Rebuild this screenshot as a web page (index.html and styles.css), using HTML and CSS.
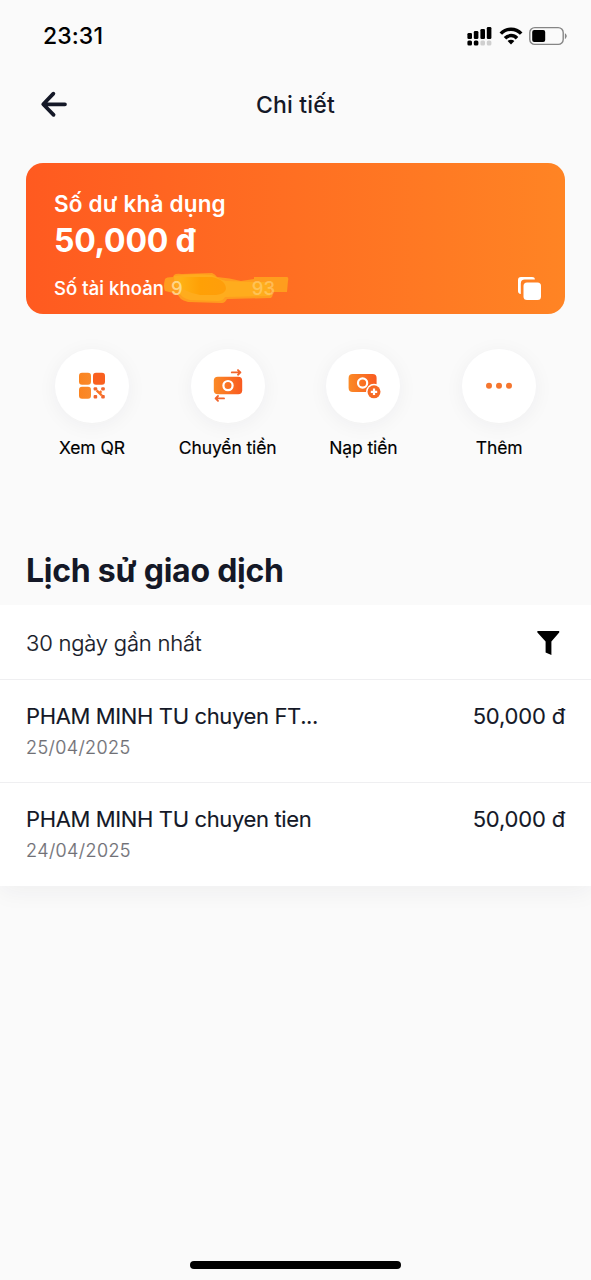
FILE: index.html
```html
<!DOCTYPE html>
<html lang="vi">
<head>
<meta charset="utf-8">
<title>Chi tiết</title>
<link rel="stylesheet" href="styles.css">
</head>
<body>
<svg class="defs" width="0" height="0" aria-hidden="true">
  <defs>
    <linearGradient id="flame" x1="0" y1="0" x2="1" y2="0"><stop offset="0" stop-color="#fb8a26"/><stop offset="1" stop-color="#f95a20"/></linearGradient>
    <linearGradient id="amber" x1="0" y1="0" x2="1" y2="0"><stop offset="0" stop-color="#fb8420"/><stop offset="1" stop-color="#f98a2c"/></linearGradient>
    <linearGradient id="stroke-core" x1="0" y1="0" x2="1" y2="0"><stop offset="0" stop-color="#ffb414"/><stop offset=".45" stop-color="#ff9d00"/><stop offset="1" stop-color="#ff9a06"/></linearGradient>
  </defs>
</svg>
<div class="screen">
  <div class="status">
    <span class="time">23:31</span>
    <svg class="status-icons" width="102" height="24" viewBox="0 0 102 24">
      <g fill="#000">
        <rect x="1.4" y="10" width="4.6" height="6" rx="1.3"/><rect x="7.8" y="8" width="4.6" height="8" rx="1.3"/><rect x="14.4" y="6" width="4.6" height="10" rx="1.3"/><rect x="20.8" y="4" width="4.6" height="12" rx="1.3"/>
        <rect x="1.4" y="17.6" width="4.6" height="5" rx="1.5"/><rect x="7.8" y="17.6" width="4.6" height="5" rx="1.5"/>
      </g>
      <g fill="#cfcfcf"><rect x="14.4" y="17.6" width="4.6" height="5" rx="1.5"/><rect x="20.8" y="17.6" width="4.6" height="5" rx="1.5"/></g>
      <g fill="none" stroke="#000" stroke-width="3.5"><path d="M34.8 10.6a14 14 0 0 1 20.4 0"/><path d="M39 15.2a8.2 8.2 0 0 1 12 0"/></g>
      <path d="M45 21.6l-3.4-3.5a4.8 4.8 0 0 1 6.8 0z"/>
      <rect x="63.8" y="4.6" width="33.4" height="16.8" rx="5" fill="none" stroke="#858585" stroke-width="1.4"/>
      <rect x="66.2" y="7" width="13" height="12" rx="2"/>
      <path d="M99.4 10.8q1.8 2.3 0 4.6z" fill="#858585" stroke="#858585"/>
    </svg>
  </div>
  <header class="header">
    <svg class="back" width="28" height="28" viewBox="0 0 28 28" fill="none" stroke="#141827" stroke-width="3.7" stroke-linecap="round" stroke-linejoin="round"><path d="M13.4 3.6L3.2 14.3l10.4 10.6M4 14.3H25"/></svg>
    <h1 class="title">Chi tiết</h1>
    <span></span>
  </header>
  <section class="card">
    <div class="card-label">Số dư khả dụng</div>
    <div class="card-amount">50,000 đ</div>
    <div class="card-account"><span>Số tài khoản</span><span class="digits">9</span><span class="digits tail">93</span>
      <svg class="marker" width="128" height="34" viewBox="0 0 128 34">
        <path d="M3 7Q4 5 11 5L12 3Q14 1 20 2L50 1Q53 2 55 5Q68 6 79 9L92 7V5H125Q127 5 126 9L125 20H110Q112 23 109 26L65 27Q63 31 60 31L26 30Q16 27 16 22L3 19Q1 15 3 7Z" fill="#ffa21e" fill-opacity=".9"/>
        <path d="M12 4Q30 1 50 3Q56 7 64 9L92 10H108V24L63 25Q61 29 56 29L28 28Q18 25 17 20Q12 14 12 4Z" fill="#ffb81c" fill-opacity=".6"/>
        <path d="M20 5H50Q64 8 64 17Q63 22 54 23H38Q21 20 17 12Q16 6 20 5Z" fill="url(#stroke-core)" fill-opacity=".8"/>
      </svg>
    </div>
    <svg class="copy" width="26" height="26" viewBox="0 0 26 26"><path d="M18.8 4.4V4Q18.8 2 16 2H5Q2 2 2 5V16Q2 18.5 4.8 19V8.4Q4.8 4.4 8.8 4.4Z" fill="#fff"/><rect x="7.5" y="7.5" width="17.5" height="17.5" rx="3.5" fill="#fff"/></svg>
  </section>
  <nav class="actions">
    <div class="action"><span class="circle"><svg width="36" height="36" viewBox="0 0 36 36">
      <rect x="5" y="4.8" width="12" height="12" rx="3" fill="url(#amber)"/><rect x="19" y="4.8" width="12" height="12" rx="3" fill="#f9601f"/><rect x="5" y="18.8" width="12" height="12" rx="3" fill="url(#amber)"/>
      <g fill="#f0672f"><rect x="19.6" y="19.2" width="3.6" height="3.4" rx="1"/><rect x="27.2" y="19.2" width="3.6" height="3.4" rx="1"/><rect x="19.6" y="27" width="3.6" height="3.4" rx="1"/><rect x="27.2" y="27" width="3.6" height="3.4" rx="1"/></g><path d="M22.6 22.4l5.2 5M25.6 24.8l1.8-1.6" stroke="#fb7425" stroke-width="2.4"/>
    </svg></span><span class="action-label">Xem QR</span></div>
    <div class="action"><span class="circle"><svg width="36" height="36" viewBox="0 0 36 36">
      <rect x="3.8" y="8.8" width="28.4" height="17.4" rx="4" fill="url(#flame)"/><circle cx="18" cy="17.6" r="4.6" fill="none" stroke="#fff" stroke-width="2.2"/>
      <g fill="none" stroke="#f2642b" stroke-width="1.9" stroke-linecap="round" stroke-linejoin="round"><path d="M21.8 4.4h8.6M28 2.1l2.4 2.3-2.4 2.3"/><path d="M14 30.4H5.6M8 28l-2.4 2.4L8 32.8"/></g>
    </svg></span><span class="action-label">Chuyển tiền</span></div>
    <div class="action"><span class="circle"><svg width="36" height="36" viewBox="0 0 36 36">
      <rect x="3.6" y="6" width="28" height="18" rx="4" fill="url(#flame)"/><circle cx="17.6" cy="15" r="4.6" fill="none" stroke="#fff" stroke-width="2.2"/>
      <circle cx="29" cy="23.8" r="8" fill="#fff"/><circle cx="29" cy="23.8" r="6.5" fill="#f66a25"/><path d="M29 20.6v6.4M25.8 23.8h6.4" stroke="#fff" stroke-width="2.2"/>
    </svg></span><span class="action-label">Nạp tiền</span></div>
    <div class="action"><span class="circle"><svg width="36" height="36" viewBox="0 0 36 36"><g fill="#f5762f"><circle cx="8" cy="17.8" r="3"/><circle cx="18" cy="17.8" r="3"/><circle cx="28" cy="17.8" r="3"/></g></svg></span><span class="action-label">Thêm</span></div>
  </nav>
  <h2 class="heading">Lịch sử giao dịch</h2>
  <section class="list">
    <div class="filter"><span class="period">30 ngày gần nhất</span>
      <svg class="funnel" width="24" height="26" viewBox="0 0 24 26"><path d="M1.8 1H22.8Q23.8 1.4 23.2 2.5L15.4 11.5V25L9.6 22.6V11.5L1.4 2.5Q.8 1.4 1.8 1Z"/></svg></div>
    <div class="row"><div><div class="name">PHAM MINH TU chuyen FT...</div><div class="date">25/04/2025</div></div><div class="sum">50,000 đ</div></div>
    <div class="row"><div><div class="name">PHAM MINH TU chuyen tien</div><div class="date">24/04/2025</div></div><div class="sum">50,000 đ</div></div>
  </section>
  <div class="home"></div>
</div>
</body>
</html>
```
FILE: styles.css
```css
* { box-sizing: border-box; }
body { margin: 0; background: #fafafa; font-family: Inter, "Liberation Sans", sans-serif; color: #141827; }
.defs { position: absolute; }
.screen { width: 591px; height: 1280px; display: flex; flex-direction: column; overflow: hidden; }
.status { height: 72px; padding: 0 23px 0 43px; display: flex; align-items: center; justify-content: space-between; }
.time { font-size: 23px; font-weight: 500; color: #000; letter-spacing: .1px; }
.status-icons { margin-top: -3px; }
.header { height: 64px; padding: 0 40px; display: grid; grid-template-columns: 28px 1fr 28px; align-items: center; }
.title { margin: 0; padding-top: 1px; text-align: center; font-size: 23px; line-height: 30px; font-weight: 500; letter-spacing: .2px; }
.card { position: relative; height: 151px; margin: 27px 26px 0; padding: 25px 29px 0 28px; border-radius: 17px; background: linear-gradient(90deg, #ff5a20, #ff8424); color: #fff; }
.card-label { font-size: 22.5px; line-height: 31px; font-weight: 600; letter-spacing: .2px; }
.card-amount { margin-top: 2px; font-size: 32px; line-height: 40px; font-weight: 700; letter-spacing: -.25px; }
.card-account { position: relative; margin-top: 15px; font-size: 18.5px; line-height: 24px; font-weight: 500; letter-spacing: .08px; display: flex; -webkit-text-stroke: .1px; }
.digits { position: relative; z-index: 1; margin-left: 7px; color: #ffdf9a; opacity: .85; }
.tail { margin-left: 69px; opacity: .45; }
.marker { position: absolute; left: 108px; top: -4px; }
.copy { position: absolute; right: 23px; bottom: 13px; }
.actions { margin: 35px 24px 0; display: grid; grid-template-columns: repeat(4, 1fr); }
.action { display: flex; flex-direction: column; align-items: center; gap: 13px; }
.circle { width: 74px; height: 74px; border-radius: 50%; background: #fff; box-shadow: 0 3px 20px rgba(30, 35, 60, .05); display: flex; align-items: center; justify-content: center; }
.action-label { font-size: 17.5px; line-height: 24px; font-weight: 400; letter-spacing: -.1px; color: #000; white-space: nowrap; -webkit-text-stroke: .15px; }
.heading { margin: 91px 26px 0; font-size: 32px; line-height: 40px; font-weight: 700; letter-spacing: -.25px; }
.list { margin-top: 14px; background: #fff; box-shadow: 0 6px 22px rgba(30, 35, 60, .05); clip-path: inset(0 0 -40px 0); }
.filter { height: 75px; padding: 0 31px 0 26px; display: flex; align-items: center; justify-content: space-between; border-bottom: 1px solid #efeff1; }
.period { font-size: 22px; line-height: 30px; font-weight: 300; letter-spacing: -.2px; margin-top: 1px; -webkit-text-stroke: .2px; }
.funnel { margin-top: 2px; }
.row { height: 103px; padding: 21px 26px 0; display: flex; justify-content: space-between; border-bottom: 1px solid #efeff1; }
.row:last-child { border-bottom: 0; }
.name, .sum { font-size: 22px; line-height: 30px; font-weight: 400; letter-spacing: -.37px; -webkit-text-stroke: .12px; }
.sum { letter-spacing: -.18px; }
.date { margin-top: 4px; font-size: 18px; line-height: 26px; font-weight: 300; color: #707076; letter-spacing: .4px; -webkit-text-stroke: .2px; }
.home { width: 211px; height: 8px; margin: auto auto 11px; border-radius: 4px; background: #000; }
```
